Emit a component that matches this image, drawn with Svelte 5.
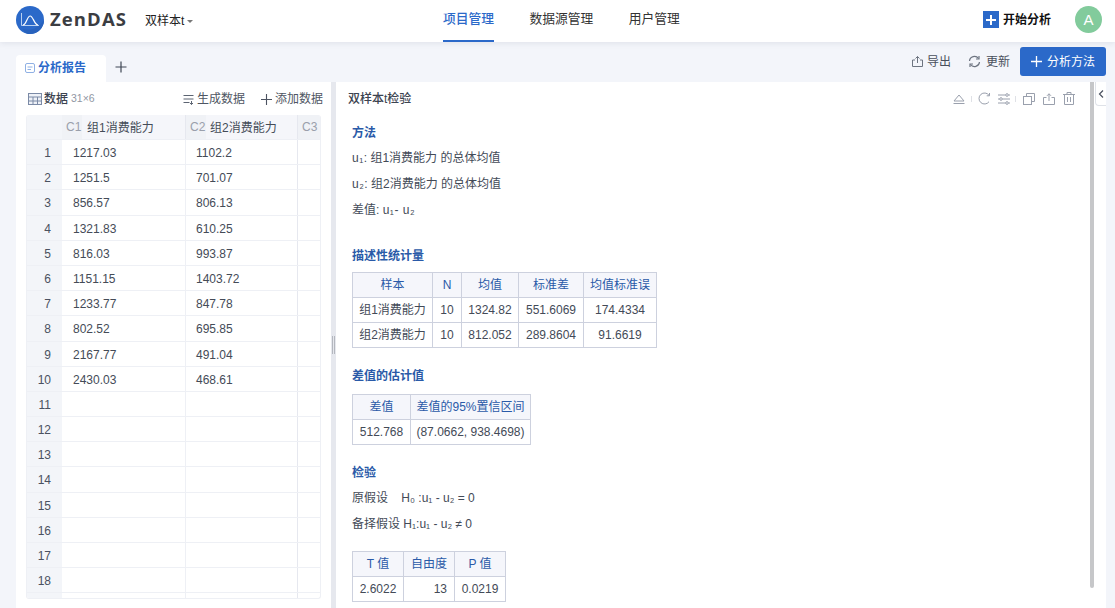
<script>
  const rows = [
    ['1217.03', '1102.2'], ['1251.5', '701.07'], ['856.57', '806.13'], ['1321.83', '610.25'],
    ['816.03', '993.87'], ['1151.15', '1403.72'], ['1233.77', '847.78'], ['802.52', '695.85'],
    ['2167.77', '491.04'], ['2430.03', '468.61'], ['', ''], ['', ''], ['', ''], ['', ''],
    ['', ''], ['', ''], ['', ''], ['', ''], ['', '']
  ];
  const nav = ['项目管理', '数据源管理', '用户管理'];
</script>

<div class="page">
  <header class="top">
    <div class="brand">
      <svg class="logo" width="28" height="28" viewBox="0 0 28 28">
        <circle cx="14" cy="14" r="14" fill="#2b69c9" />
        <path d="M28 14a14 14 0 0 1-14 14c-4 0-6-2-7-5 6 2 14 1 21-9z" fill="#2862bd" />
        <path d="M5.500 7v12.500h17.500" fill="none" stroke="#b9d0f0" stroke-width="1" />
        <path d="M7 19c3.500-.5 4-8.500 7-9s4 8.500 8 9" fill="none" stroke="#fff" stroke-width="1.200" />
      </svg>
      <span class="wordmark">ZenDAS</span>
      <span class="project">双样本t</span>
      <span class="caret"></span>
    </div>
    <nav class="nav">
      {#each nav as item, i}
        <span class="nav-item" class:active={i === 0}>{item}</span>
      {/each}
    </nav>
    <div class="top-right">
      <span class="start"><span class="start-box">
        <svg width="16" height="16" viewBox="0 0 16 16"><path d="M8 3v10M3 8h10" stroke="#fff" stroke-width="2" /></svg>
      </span>开始分析</span>
      <span class="avatar">A</span>
    </div>
  </header>

  <div class="tabbar">
    <div class="tabs">
      <div class="tab">
        <svg width="12" height="12" viewBox="0 0 12 12" fill="none" stroke="#8fb0e4"><rect x="1.500" y="1.500" width="9" height="9" rx="1.500" /><path d="M3.500 5h5M3.500 7.500h3.500" /></svg>
        <span>分析报告</span>
      </div>
      <svg class="tab-add" width="12" height="12" viewBox="0 0 12 12"><path d="M6 .5v11M.5 6h11" stroke="#3f4654" stroke-width="1.200" /></svg>
    </div>
    <div class="actions">
      <span class="action">
        <svg width="13" height="13" viewBox="0 0 13 13" fill="none" stroke="#6d7480"><path d="M4 5H1.500v6.500h10V5H9M6.500 8V1.500M4.500 3.500l2-2 2 2" /></svg>
        导出
      </span>
      <span class="action refresh">
        <svg width="13" height="13" viewBox="0 0 13 13" fill="none" stroke="#6d7480" stroke-width="1.200"><path d="M1.500 6A5 5 0 0 1 10.500 3.500M11.500 7A5 5 0 0 1 2.500 9.500" /><path d="M11 1v3H8M2 12V9h3" /></svg>
        更新
      </span>
      <button class="method">
        <svg width="11" height="11" viewBox="0 0 11 11"><path d="M5.500 0v11M0 5.500h11" stroke="#fff" stroke-width="1.300" /></svg>
        分析方法
      </button>
    </div>
  </div>

  <main class="work">
    <section class="left">
      <div class="data-head">
        <div class="data-title">
          <svg width="14" height="12" viewBox="0 0 14 12" fill="none" stroke="#7b8aa6"><rect x=".5" y=".5" width="13" height="11" fill="#eef1f7" /><path d="M.5 4h13M.5 8h13M5 4v8M9.500 4v8" /></svg>
          <strong>数据</strong><em>31×6</em>
        </div>
        <div class="data-tools">
          <span class="tool">
            <svg width="11" height="11" viewBox="0 0 11 11" fill="none" stroke="#5c6472"><path d="M.5 1.500h10M.5 5h10M.5 8.500h6" /><path d="M8.500 7v3.500M7 9l1.500 1.500L10 9" /></svg>
            生成数据
          </span>
          <span class="tool">
            <svg width="11" height="11" viewBox="0 0 11 11"><path d="M5.500 0v11M0 5.500h11" stroke="#4c5361" stroke-width="1.100" /></svg>
            添加数据
          </span>
        </div>
      </div>
      <div class="sheet">
        <div class="sheet-row head">
          <div class="cell num"></div>
          <div class="cell c1"><span class="col-id">C1</span><span class="col-name">组1消费能力</span></div>
          <div class="cell c2"><span class="col-id">C2</span><span class="col-name">组2消费能力</span></div>
          <div class="cell c3"><span class="col-id">C3</span></div>
        </div>
        {#each rows as row, i}
          <div class="sheet-row body">
            <div class="cell num">{i === 18 ? '' : i + 1}</div>
            <div class="cell c1 val">{row[0]}</div>
            <div class="cell c2 val">{row[1]}</div>
            <div class="cell c3"></div>
          </div>
        {/each}
      </div>
    </section>

    <div class="gutter"><span class="grip"></span></div>

    <section class="right">
      <div class="right-head">
        <span class="report-title">双样本t检验</span>
        <div class="icons">
          <svg class="ic-e" width="12" height="12" viewBox="0 0 12 12" fill="none" stroke="#9aa0ad"><path d="M1 8l5-6 5 6zM0.500 10.500h11" /></svg>
          <i class="sep s1"></i>
          <svg class="ic-r" width="13" height="13" viewBox="0 0 13 13" fill="none" stroke="#9aa0ad"><path d="M11 3.300A5.500 5.500 0 1 0 11 9.700" /><path d="M11.500 1v2.800H8.700" /></svg>
          <svg class="ic-s" width="12" height="12" viewBox="0 0 12 12" fill="none" stroke="#9aa0ad"><path d="M0 2h7.500M10.500 2H12M0 6h1.500M4.500 6H12M0 10h7.500M10.500 10H12" /><circle cx="9" cy="2" r="1.300" /><circle cx="3" cy="6" r="1.300" /><circle cx="9" cy="10" r="1.300" /></svg>
          <i class="sep s2"></i>
          <svg class="ic-c" width="12" height="12" viewBox="0 0 12 12" fill="none" stroke="#9aa0ad"><path d="M3.500 3V.5h8v8H9" /><rect x=".5" y="3.500" width="8" height="8" /></svg>
          <svg class="ic-u" width="12" height="12" viewBox="0 0 12 12" fill="none" stroke="#9aa0ad"><path d="M3.500 4.500H.5v7h11v-7h-3M6 8V.8M4 2.800l2-2 2 2" /></svg>
          <svg class="ic-t" width="12" height="13" viewBox="0 0 12 13" fill="none" stroke="#9aa0ad"><path d="M0 2.500h12M4 2.500V.5h4v2M1.500 2.500v10h9v-10M4.500 5v5M7.500 5v5" /></svg>
        </div>
      </div>
      <div class="report">
        <h3 class="h-method">方法</h3>
        <p class="p-1"><span class="u">u₁</span>: 组1消费能力 的总体均值</p>
        <p><span class="u">u₂</span>: 组2消费能力 的总体均值</p>
        <p>差值: <span class="u">u₁- u₂</span></p>

        <h3 class="h-desc">描述性统计量</h3>
        <table class="t-desc">
          <thead><tr><th class="w80">样本</th><th class="w29">N</th><th class="w57">均值</th><th class="w65">标准差</th><th class="w73">均值标准误</th></tr></thead>
          <tbody>
            <tr><td>组1消费能力</td><td>10</td><td>1324.82</td><td>551.6069</td><td>174.4334</td></tr>
            <tr><td>组2消费能力</td><td>10</td><td>812.052</td><td>289.8604</td><td>91.6619</td></tr>
          </tbody>
        </table>

        <h3 class="h-diff">差值的估计值</h3>
        <table class="t-diff">
          <thead><tr><th class="w58">差值</th><th class="w120">差值的95%置信区间</th></tr></thead>
          <tbody><tr><td>512.768</td><td>(87.0662, 938.4698)</td></tr></tbody>
        </table>

        <h3 class="h-test">检验</h3>
        <p class="p-1">原假设&nbsp;&nbsp;&nbsp; H₀ :u₁ - u₂ = 0</p>
        <p>备择假设 H₁:u₁ - u₂ ≠ 0</p>
        <table class="t-test">
          <thead><tr><th class="w51">T 值</th><th class="w51">自由度</th><th class="w51">P 值</th></tr></thead>
          <tbody><tr><td>2.6022</td><td class="r">13</td><td>0.0219</td></tr></tbody>
        </table>
      </div>
      <span class="scrollbar"></span>
      <span class="collapse">
        <svg width="6" height="8" viewBox="0 0 6 8" fill="none" stroke="#4a5160" stroke-width="1.200"><path d="M5 .5L1.500 4 5 7.500" /></svg>
      </span>
    </section>
  </main>
</div>

<style>
  :global(body) {
    margin: 0;
    overflow: hidden;
    background: #f3f5fa;
  }
  .page {
    width: 1115px;
    height: 608px;
    display: flex;
    flex-direction: column;
    overflow: hidden;
    font: 12px/1.5 "Liberation Sans", "Noto Sans CJK SC", sans-serif;
    color: #333a47;
  }

  .top {
    height: 42px;
    flex: none;
    background: #fff;
    box-shadow: 0 1px 6px rgba(40, 50, 80, .1);
    display: flex;
    align-items: center;
    position: relative;
    z-index: 1;
  }
  .brand {
    width: 443px;
    padding-left: 16px;
    box-sizing: border-box;
    display: flex;
    align-items: center;
  }
  .logo { flex: none; margin-top: -3px; }
  .wordmark {
    margin-left: 6px;
    font: 700 18.500px/1 "Open Sans", "Liberation Sans", sans-serif;
    letter-spacing: 1.100px;
    color: #3b3d42;
    margin-top: -3px;
  }
  .project { margin-left: 18px; color: #222; }
  .caret {
    margin: 1px 0 0 3px;
    border: 3.500px solid transparent;
    border-top: 3.500px solid #777;
    border-bottom: 0;
  }
  .nav { display: flex; gap: 35.500px; flex: 1; }
  .nav-item {
    height: 42px;
    line-height: 38px;
    font-size: 12.750px;
    color: #333;
    box-sizing: border-box;
  }
  .nav-item.active {
    color: #2b69c9;
    font-weight: 500;
    border-bottom: 2px solid #2b69c9;
  }
  .top-right { display: flex; align-items: center; padding-right: 13px; }
  .start {
    display: flex;
    align-items: center;
    gap: 4px;
    font-weight: 700;
    color: #111;
    margin-right: 24px;
    margin-top: -3px;
  }
  .start-box {
    width: 16px;
    height: 17px;
    background: #2b69c9;
    display: flex;
    align-items: center;
  }
  .start-box svg { display: block; }
  .avatar {
    width: 27px;
    height: 27px;
    border-radius: 50%;
    background: #82cb9c;
    color: #fff;
    font-size: 15px;
    line-height: 27px;
    text-align: center;
    margin-top: -3px;
  }

  .tabbar {
    height: 40px;
    flex: none;
    display: flex;
    justify-content: space-between;
    align-items: flex-end;
    padding: 0 9px 0 16px;
  }
  .tabs { display: flex; align-items: center; }
  .tab {
    width: 90px;
    height: 27px;
    background: #fff;
    border-radius: 4px 4px 0 0;
    display: flex;
    align-items: center;
    gap: 2px;
    padding: 0 0 2px 8px;
    box-sizing: border-box;
    color: #2b69c9;
    font-weight: 700;
  }
  .tab-add { margin: -3px 0 0 9px; }
  .actions { display: flex; align-items: center; height: 40px; padding-bottom: 1px; box-sizing: border-box; }
  .action { display: flex; align-items: center; gap: 3px; color: #4a505c; }
  .action:first-child svg { margin-left: -2px; }
  .refresh { margin-left: 17px; gap: 5px; }
  .method {
    margin-left: 10px;
    width: 86px;
    height: 29px;
    border: 0;
    border-radius: 3px;
    background: #2b69c9;
    color: #fff;
    font: inherit;
    padding: 0;
    display: flex;
    align-items: center;
    justify-content: center;
    gap: 5px;
  }

  .work { flex: 1; display: flex; padding-left: 16px; min-height: 0; }
  .left {
    width: 315px;
    flex: none;
    background: #fff;
    box-sizing: border-box;
    padding: 0 10px;
  }
  .data-head {
    height: 33px;
    display: flex;
    justify-content: space-between;
    align-items: center;
    margin-right: -2px;
    padding-left: 2px;
    padding-top: 1px;
    box-sizing: border-box;
  }
  .data-title { display: flex; align-items: center; gap: 2px; }
  .data-title strong { font-weight: 500; color: #3c4350; }
  .data-title em { font-style: normal; font-size: 10.500px; color: #9197a3; margin-left: 1px; }
  .data-tools { display: flex; gap: 16px; color: #4f5663; }
  .tool { display: flex; align-items: center; gap: 3px; }

  .sheet {
    border: 1px solid #eef0f5;
    border-top: 0;
    border-radius: 3px;
    overflow: hidden;
    height: 483.500px;
    box-sizing: border-box;
  }
  .sheet-row {
    display: flex;
    height: 25.200px;
    box-sizing: border-box;
    border-bottom: 1px solid #eef0f5;
  }
  .sheet-row.head { height: 25px; background: #f5f6fa; }
  .cell { box-sizing: border-box; line-height: 25px; border-right: 1px solid #eef0f5; height: 100%; flex: none; }
  .body .cell { line-height: 26.500px; }
  .num { width: 35px; background: #f3f5f9; text-align: right; padding-right: 11px; color: #4a5160; border-right: 0; }
  .c1 { width: 124px; }
  .c2 { width: 112px; border-right-color: #e6e8ef; }
  .c3 { width: 24px; border-right: 0; }
  .val { padding-left: 11px; color: #444b57; }
  .c2.val { padding-left: 10px; }
  .head .cell { display: flex; align-items: center; }
  .head .c1 { border-right-color: #e6e8ef; }
  .col-id { color: #9a9fab; padding-left: 4px; width: 20px; box-sizing: border-box; background: #f0f2f6; height: 100%; }
  .col-name { margin: 2px 0 0 4px; color: #444b57; }
  .c1 .col-name { margin-left: 5px; }
  .c3 .col-id { width: 24px; }

  .gutter {
    width: 5px;
    flex: none;
    background: #e6e8ee;
    display: flex;
    align-items: center;
    justify-content: center;
  }
  .grip { width: 3px; height: 18px; border-left: 1px solid #b4b7be; border-right: 1px solid #b4b7be; box-sizing: border-box; }

  .right {
    flex: 1;
    background: #fff;
    position: relative;
    margin-right: 9px;
    overflow: hidden;
  }
  .right-head {
    height: 32px;
    display: flex;
    align-items: center;
    justify-content: space-between;
    padding: 1px 31px 0 12px;
    box-sizing: border-box;
  }
  .report-title { font-weight: 500; color: #3c4350; }
  .icons { display: flex; align-items: center; }
  .sep { width: 1px; height: 6px; background: #dfe1e6; flex: none; }
  .s1 { margin: 0 6px 0 6px; }
  .ic-s { margin-left: 7px; }
  .s2 { margin: 0 7px 0 5px; }
  .ic-u { margin-left: 8px; }
  .ic-t { margin-left: 8px; }

  .report { padding-left: 16px; font-size: 12px; color: #434a57; }
  .u { letter-spacing: .5px; }
  h3 { margin: 0; font-size: 12px; font-weight: 700; color: #2a5aa8; line-height: 18px; }
  p { margin: 8px 0 0; line-height: 18px; }
  .report p.p-1 { margin-top: 7px; }
  .h-method { margin-top: 10px; }
  .h-desc { margin-top: 28px; }
  table {
    border-collapse: collapse;
    table-layout: fixed;
    width: auto;
  }
  th, td {
    border: 1px solid #cdd1de;
    height: 25px;
    padding: 0;
    text-align: center;
    font-size: 12px;
    font-weight: 400;
    box-sizing: border-box;
    white-space: nowrap;
  }
  th { background: #f5f6fb; color: #2a5aa8; }
  td { color: #434a57; }
  td.r { text-align: right; padding-right: 7px; }
  .w80 { width: 80px; }
  .w29 { width: 29px; }
  .w57 { width: 57px; }
  .w65 { width: 65px; }
  .w73 { width: 73px; }
  .w58 { width: 58px; }
  .w120 { width: 120px; }
  .w51 { width: 51px; }
  .t-desc { margin-top: 7px; }
  .t-diff { margin-top: 9px; }
  .t-test { margin-top: 18px; }
  .h-diff { margin-top: 19px; }
  .h-test { margin-top: 19px; }

  .scrollbar {
    position: absolute;
    top: 0;
    left: 754px;
    width: 4px;
    height: 506px;
    background: #c6c7c9;
    border-radius: 0 0 2px 2px;
  }
  .collapse {
    position: absolute;
    right: 0;
    top: 0;
    width: 11px;
    height: 24px;
    background: #fff;
    border: 1px solid #dfe2e8;
    border-width: 0 0 1px 1px;
    border-radius: 0 0 0 4px;
    box-sizing: border-box;
    display: flex;
    align-items: center;
    justify-content: center;
  }
</style>
